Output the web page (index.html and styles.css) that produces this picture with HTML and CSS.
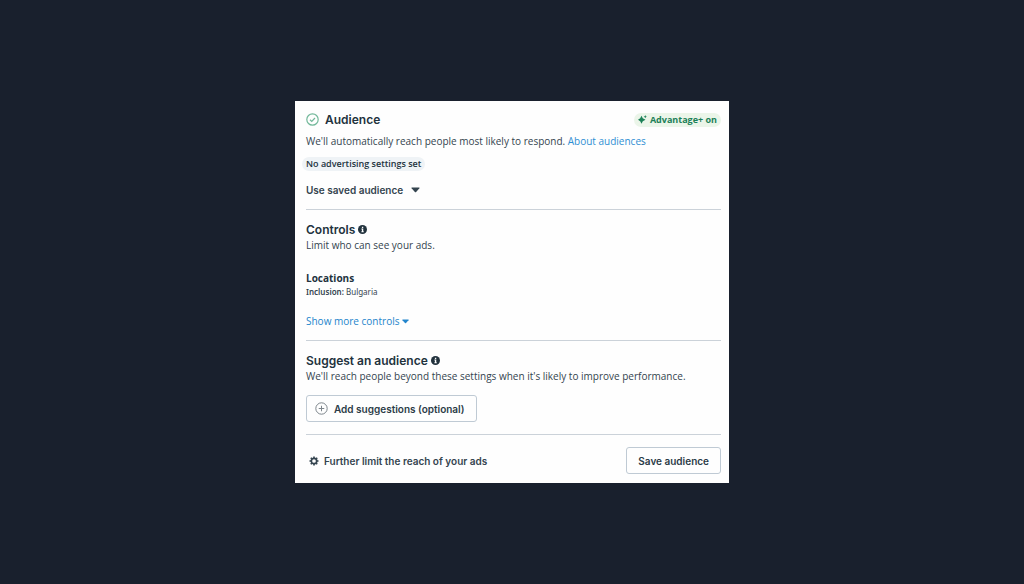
FILE: index.html
```html
<!DOCTYPE html>
<html lang="en">
<head>
<meta charset="utf-8">
<meta name="viewport" content="width=device-width, initial-scale=1">
<title>Audience</title>
<link rel="stylesheet" href="styles.css">
</head>
<body>
<main class="card">
  <section class="section">
    <header class="head">
      <svg class="check" viewBox="0 0 26 26" aria-hidden="true"><circle cx="13" cy="13" r="11.4"/><path d="M8 13.5l3.5 3.5 6.5-7"/></svg>
      <h1 class="title">Audience</h1>
      <span class="badge">
        <svg class="spark" viewBox="0 0 18 18" aria-hidden="true"><path d="M7 1.500l2.600 5L15 9.500l-5.400 2.800L7 17.500l-2.600-5.200L0 9.500l4.400-3zM14.500 0l1 2.300 2.300 1-2.300 1-1 2.300-1-2.300-2.300-1 2.300-1z"/></svg>
        Advantage+ on
      </span>
    </header>
    <p class="text intro">We'll automatically reach people most likely to respond. <a class="link" href="#about">About audiences</a></p>
    <span class="chip">No advertising settings set</span>
    <button class="plain saved" type="button">Use saved audience
      <svg class="caret" viewBox="0 0 18 12" aria-hidden="true"><path d="M2 1h14q2 0 .8 1.500l-6.500 7.500q-1.300 1.300-2.600 0L1.200 2.500Q0 1 2 1z"/></svg>
    </button>
  </section>

  <section class="section">
    <h2 class="title info-title">Controls
      <svg class="info" viewBox="0 0 18 18" aria-hidden="true"><circle cx="9" cy="9" r="9"/><path d="M7.800 3.500h2.700v2.400H7.800zM6.800 7.200h3.700v5.300h1v1.800H6.800v-1.800h1V9h-1z"/></svg>
    </h2>
    <p class="text">Limit who can see your ads.</p>
    <h3 class="subtitle">Locations</h3>
    <p class="detail"><strong class="key">Inclusion:</strong> Bulgaria</p>
    <button class="plain more" type="button">Show more controls
      <svg class="caret small" viewBox="0 0 18 12" aria-hidden="true"><path d="M2 1h14q2 0 .8 1.500l-6.500 7.500q-1.300 1.300-2.600 0L1.200 2.500Q0 1 2 1z"/></svg>
    </button>
  </section>

  <section class="section suggest">
    <h2 class="title info-title">Suggest an audience
      <svg class="info" viewBox="0 0 18 18" aria-hidden="true"><circle cx="9" cy="9" r="9"/><path d="M7.800 3.500h2.700v2.400H7.800zM6.800 7.200h3.700v5.300h1v1.800H6.800v-1.800h1V9h-1z"/></svg>
    </h2>
    <p class="text">We'll reach people beyond these settings when it's likely to improve performance.</p>
    <button class="button add" type="button">
      <svg class="plus" viewBox="0 0 26 26" aria-hidden="true"><circle cx="13" cy="13" r="11.400"/><path d="M13 7.500v11M7.500 13h11"/></svg>
      Add suggestions (optional)
    </button>
  </section>

  <footer class="footer">
    <button class="plain limit" type="button">
      <svg class="gear" viewBox="0 0 20 20" aria-hidden="true"><circle class="ring" cx="10" cy="10" r="5.400"/><path class="teeth" d="M10 1v3M10 16v3M1 10h3M16 10h3M3.600 3.600l2.200 2.200M14.200 14.200l2.200 2.200M3.600 16.400l2.200-2.200M14.200 5.800l2.200-2.200"/></svg>
      Further limit the reach of your ads
    </button>
    <button class="button" type="button">Save audience</button>
  </footer>
</main>
</body>
</html>
```

FILE: styles.css
```css
* {
  box-sizing: border-box;
}

body {
  margin: 0;
  min-height: 100vh;
  display: grid;
  place-items: center;
  background: #19202d;
  color: #34444f;
  font-family: "Open Sans", "Noto Sans", sans-serif;
  font-size: 10px;
  line-height: 16px;
}

h1, h2, h3, p {
  margin: 0;
}

svg {
  display: block;
  flex: none;
}

.card {
  width: 100%;
  max-width: 434px;
  padding: 10px 8px 9px 11px;
  background: #fefefe;
}

.section {
  display: flex;
  flex-direction: column;
  align-items: flex-start;
  padding-bottom: 11px;
  border-bottom: 1px solid #cbd2d9;
}

.section + .section {
  padding-top: 12px;
}

.section.suggest {
  padding-bottom: 12px;
}

.head {
  align-self: stretch;
  display: flex;
  align-items: center;
  gap: 6px;
  height: 17px;
}

.title {
  font-family: Inter, sans-serif;
  font-size: 12px;
  line-height: 15px;
  font-weight: 600;
  color: #22323d;
}

.check {
  width: 13px;
  height: 13px;
  fill: none;
  stroke: #72b89a;
  stroke-width: 2.4;
}

.badge {
  display: flex;
  align-items: center;
  gap: 3px;
  height: 14px;
  margin-left: auto;
  padding: 0 4px;
  border-radius: 7px;
  background: #ebf5e9;
  color: #1c8058;
  font-size: 9px;
  font-weight: 700;
}

.spark {
  width: 9px;
  height: 9px;
  fill: currentColor;
}

.intro {
  margin-top: 5px;
}

.link {
  color: #2f8fd3;
  text-decoration: none;
}

.chip {
  margin: 8px 0 0 -4px;
  padding: 0 4px;
  border-radius: 7px;
  background: #eff3f6;
  color: #22323d;
  font-size: 9px;
  line-height: 14px;
  font-weight: 600;
}

.plain {
  display: flex;
  align-items: center;
  padding: 0;
  border: 0;
  background: none;
  color: inherit;
  font: inherit;
  cursor: pointer;
}

.saved,
.limit,
.button {
  font-family: Inter, sans-serif;
  font-size: 10px;
  font-weight: 600;
}

.saved {
  gap: 8px;
  margin-top: 11px;
}

.caret {
  width: 9px;
  height: 6px;
  fill: currentColor;
}

.caret.small {
  width: 7px;
  height: 5px;
}

.info-title {
  display: flex;
  align-items: center;
  gap: 3px;
}

.info {
  width: 9px;
  height: 9px;
  fill: currentColor;
}

.info path {
  fill: #fefefe;
}

.subtitle {
  margin-top: 17px;
  color: #22323d;
  font-size: 10px;
  font-weight: 700;
}

.detail {
  font-family: "Noto Sans", sans-serif;
  font-size: 8px;
  line-height: 12px;
}

.key {
  font-weight: 600;
}

.more {
  gap: 3px;
  margin-top: 15px;
  color: #2385cc;
}

.button {
  display: flex;
  align-items: center;
  gap: 6px;
  height: 27px;
  padding: 0 11px;
  border: 1px solid #bfcad4;
  border-radius: 3px;
  background: #fefefe;
  color: #2b3b47;
  cursor: pointer;
}

.add {
  margin-top: 11px;
  padding-left: 8px;
}

.plus {
  width: 13px;
  height: 13px;
  fill: none;
  stroke: #7d858b;
  stroke-width: 2;
}

.footer {
  display: flex;
  align-items: center;
  justify-content: space-between;
  padding-top: 12px;
}

.limit {
  gap: 5px;
  padding-left: 3px;
}

.gear {
  width: 10px;
  height: 10px;
  fill: none;
  stroke: currentColor;
}

.ring {
  stroke-width: 3.4;
}

.teeth {
  stroke-width: 3.2;
}
```
